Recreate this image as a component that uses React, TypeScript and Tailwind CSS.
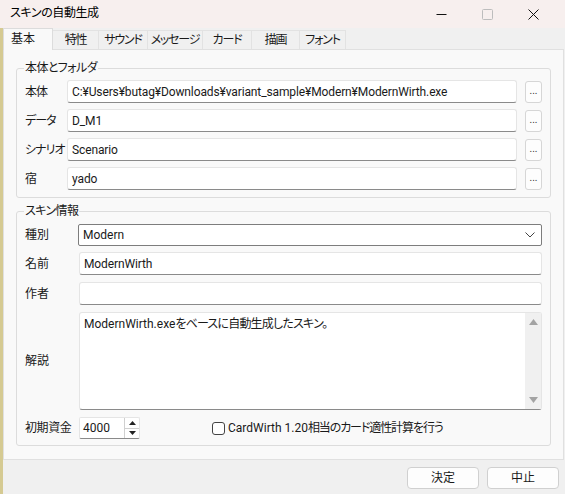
import React from 'react'

const tabs = ['基本', '特性', 'サウンド', 'メッセージ', 'カード', '描画', 'フォント']
const tabWidths = ['w-[50px]', 'w-[46px]', 'w-[49px]', 'w-[55px]', 'w-[49px]', 'w-[48px]', 'w-[46px]']

function Field({ value = '', className = '' }: { value?: string; className?: string }) {
  return (
    <div
      className={`h-[23px] flex-1 flex items-center bg-white border border-[#e5e5e5] border-b-[#8a8a8a] rounded-[3px] px-[4px] text-[#1a1a1a] tracking-[-0.12px] overflow-hidden ${className}`}
    >
      {value}
    </div>
  )
}

function BrowseButton() {
  return (
    <div className="w-[17px] h-[22px] flex items-center justify-center bg-[#fdfdfd] border border-[#d6d6d6] rounded-[3px] text-[10px] leading-none text-[#333] pb-[2px]">
      ...
    </div>
  )
}

function PathRow({ label, value }: { label: string; value: string }) {
  return (
    <div className="flex items-center">
      <div className="w-[42px] shrink-0 tracking-[-1px]">{label}</div>
      <Field value={value} />
      <div className="ml-[8px]">
        <BrowseButton />
      </div>
    </div>
  )
}

function Group({ title, children, className = '' }: { title: string; children: React.ReactNode; className?: string }) {
  return (
    <fieldset className={`mx-[12px] border border-[#dcdcdc] rounded-[3px] pl-[8px] pr-[8px] ${className}`}>
      <legend className="px-[1px] -ml-[1px] leading-[16px] tracking-[-0.6px]">{title}</legend>
      {children}
    </fieldset>
  )
}

export default function App() {
  return (
    <div className="w-[565px] h-[494px] bg-[#f0f0f0] flex flex-col overflow-hidden whitespace-nowrap leading-[16px] text-[12px] text-[#1a1a1a] [font-feature-settings:'palt'] font-['Roboto','Noto_Sans_CJK_JP',sans-serif]">
      {/* Title bar */}
      <div className="h-[28px] shrink-0 flex items-center bg-[#f7efee]">
        <div className="pl-[10px] pb-[2px] text-[12px] text-black tracking-[-0.4px]">スキンの自動生成</div>
        <div className="ml-auto flex items-center h-full">
          <div className="w-[46px] h-full flex items-center justify-center">
            <svg width="11" height="11" viewBox="0 0 11 11">
              <path d="M0.5 5.5h10" stroke="#111" strokeWidth="1" />
            </svg>
          </div>
          <div className="w-[46px] h-full flex items-center justify-center">
            <svg width="11" height="11" viewBox="0 0 11 11">
              <rect x="0.5" y="0.5" width="10" height="10" rx="1" fill="none" stroke="#bdbdbd" strokeWidth="1" />
            </svg>
          </div>
          <div className="w-[46px] h-full flex items-center justify-center">
            <svg width="11" height="11" viewBox="0 0 11 11">
              <path d="M0.5 0.5l10 10M10.5 0.5l-10 10" stroke="#111" strokeWidth="1" />
            </svg>
          </div>
          <div className="w-[9px]" />
        </div>
      </div>

      <div className="flex flex-1 min-h-0">
        {/* desktop edge */}
        <div className="w-[3px] bg-[#d5ca92]" />

        <div className="flex-1 flex flex-col min-w-0">
          {/* Tabs */}
          <div className="h-[21px] shrink-0 flex items-end">
            {tabs.map((t, i) =>
              i === 0 ? (
                <div
                  key={t}
                  className={`${tabWidths[i]} h-[22px] -mb-px relative z-10 bg-[#f9f9f9] border border-b-0 border-[#dcdcdc] flex items-center pl-[7px] pb-[2px]`}
                >
                  {t}
                </div>
              ) : (
                <div
                  key={t}
                  className={`${tabWidths[i]} h-[19px] bg-[#f0f0f0] border border-b-0 border-l-0 border-[#e2e2e2] flex items-center justify-center tracking-[-1.2px]`}
                >
                  {t}
                </div>
              )
            )}
          </div>

          {/* Panel */}
          <div className="h-[411px] shrink-0 mr-[1px] bg-[#f9f9f9] border border-[#e0e0e0] pt-[10px]">
            <Group title="本体とフォルダ" className="pt-[4px] pb-[7px]">
              <div className="flex flex-col gap-[6px]">
                <PathRow label="本体" value="C:¥Users¥butag¥Downloads¥variant_sample¥Modern¥ModernWirth.exe" />
                <PathRow label="データ" value="D_M1" />
                <PathRow label="シナリオ" value="Scenario" />
                <PathRow label="宿" value="yado" />
              </div>
            </Group>

            <Group title="スキン情報" className="mt-[5px] pt-[5px] pb-[6px]">
              <div className="flex items-center">
                <div className="w-[53px] shrink-0">種別</div>
                <div className="h-[22px] flex-1 flex items-center bg-white border border-[#7d7d7d] rounded-[2px] pl-[4px] pr-[6px]">
                  <span>Modern</span>
                  <svg className="ml-auto" width="10" height="6" viewBox="0 0 10 6">
                    <path d="M0.5 0.5l4.5 4.5 4.5-4.5" fill="none" stroke="#444" strokeWidth="1" />
                  </svg>
                </div>
              </div>
              <div className="flex items-center mt-[6px]">
                <div className="w-[54px] shrink-0">名前</div>
                <Field value="ModernWirth" />
              </div>
              <div className="flex items-center mt-[7px]">
                <div className="w-[54px] shrink-0">作者</div>
                <Field />
              </div>
              <div className="flex items-center mt-[7px]">
                <div className="w-[54px] shrink-0">解説</div>
                <div className="h-[98px] flex-1 flex bg-white border border-[#e5e5e5] border-b-[#8a8a8a] rounded-[3px]">
                  <div className="flex-1 pl-[4px] pt-[3px]">
                    ModernWirth.exe
                    <span className="tracking-[-0.8px]">をベースに自動生成したスキン。</span>
                  </div>
                  <div className="w-[16px] bg-[#f0f0f0] flex flex-col items-center justify-between py-[6px]">
                    <svg width="9" height="6" viewBox="0 0 9 6">
                      <path d="M0 6L4.5 0 9 6z" fill="#a3a3a3" />
                    </svg>
                    <svg width="9" height="6" viewBox="0 0 9 6">
                      <path d="M0 0L4.5 6 9 0z" fill="#a3a3a3" />
                    </svg>
                  </div>
                </div>
              </div>
              <div className="flex items-center mt-[7px]">
                <div className="w-[54px] shrink-0 tracking-[-0.4px]">初期資金</div>
                <div className="h-[22px] w-[61px] flex bg-white border border-[#e5e5e5] border-b-[#8a8a8a] rounded-[2px]">
                  <div className="flex-1 flex items-center pl-[3px]">4000</div>
                  <div className="w-[15px] flex flex-col border-l border-[#d0d0d0]">
                    <div className="flex-1 flex items-center justify-center border-b border-[#d0d0d0]">
                      <svg width="7" height="4" viewBox="0 0 7 4">
                        <path d="M0 4L3.5 0 7 4z" fill="#222" />
                      </svg>
                    </div>
                    <div className="flex-1 flex items-center justify-center">
                      <svg width="7" height="4" viewBox="0 0 7 4">
                        <path d="M0 0L3.5 4 7 0z" fill="#222" />
                      </svg>
                    </div>
                  </div>
                </div>
                <div className="ml-[72px] flex items-center">
                  <div className="w-[13px] h-[13px] border border-[#444] rounded-[3px] bg-white" />
                  <span className="ml-[3px]">
                    CardWirth 1.20<span className="tracking-[-1.1px]">相当のカード適性計算を行う</span>
                  </span>
                </div>
              </div>
            </Group>
          </div>

          {/* Buttons */}
          <div className="flex-1 flex justify-end items-start pt-[7px] pr-[6px] gap-[8px]">
            <div className="w-[72px] h-[22px] flex items-center justify-center bg-[#fdfdfd] border border-[#d0d0d0] rounded-[4px]">
              決定
            </div>
            <div className="w-[72px] h-[22px] flex items-center justify-center bg-[#fdfdfd] border border-[#d0d0d0] rounded-[4px]">
              中止
            </div>
          </div>
        </div>
      </div>
    </div>
  )
}
